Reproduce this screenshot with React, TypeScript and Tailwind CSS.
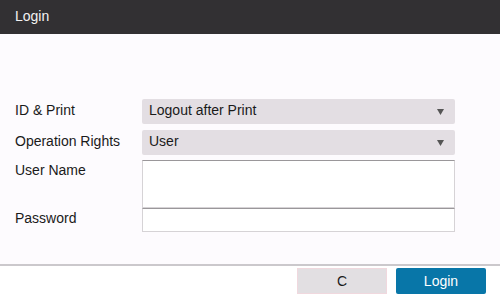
import React from "react";

function Arrow() {
  return (
    <svg width="7" height="6" viewBox="0 0 7 6" className="block">
      <path d="M0 0 H7 L3.5 6 Z" fill="#555" />
    </svg>
  );
}

export default function App() {
  return (
    <div
      className="w-[500px] h-[300px] flex flex-col bg-white overflow-hidden"
      style={{ fontFamily: '"Liberation Sans", Arial, sans-serif' }}
    >
      <div className="h-[34px] bg-[#323033] flex items-center pl-[15px] pb-[1px] text-[14px] text-[#f2f2f2]">
        Login
      </div>
      <div className="h-[230px] bg-[#fdfbfe] pt-[65px] text-[14px] text-[#1a1a1a]">
        <div className="flex items-center h-[25px]">
          <div className="w-[142px] pl-[15px] pb-[2px]">ID &amp; Print</div>
          <div className="w-[313px] h-[25px] rounded-[2px] bg-[#e3dee3] flex items-center justify-between pl-[7px] pr-[11px]">
            <span className="pb-[2px]">Logout after Print</span>
            <Arrow />
          </div>
        </div>
        <div className="flex items-center h-[25px] mt-[6px]">
          <div className="w-[142px] pl-[15px] pb-[2px]">Operation Rights</div>
          <div className="w-[313px] h-[25px] rounded-[2px] bg-[#e3dee3] flex items-center justify-between pl-[7px] pr-[11px]">
            <span className="pb-[2px]">User</span>
            <Arrow />
          </div>
        </div>
        <div className="flex mt-[5px]">
          <div className="w-[142px] pl-[15px]">User Name</div>
          <div className="w-[313px] h-[48px] bg-white border border-[#d6d3d6] border-t-[#9a979a]" />
        </div>
        <div className="flex">
          <div className="w-[142px] pl-[15px]">Password</div>
          <div className="w-[313px] h-[24px] bg-white border border-[#d6d3d6] border-t-[#9a979a]" />
        </div>
      </div>
      <div className="h-[2px] bg-[#cbc8cc]" />
      <div className="flex-1 flex items-start justify-end pt-[2px] pr-[14px] gap-[9px] text-[14px]">
        <div className="w-[90px] h-[26px] bg-[#e2dfe2] border border-[#f0d8de] flex items-center justify-center text-[#1a1a1a]">
          C
        </div>
        <div className="w-[90px] h-[26px] bg-[#0876a8] rounded-[2px] flex items-center justify-center text-white">
          Login
        </div>
      </div>
    </div>
  );
}
